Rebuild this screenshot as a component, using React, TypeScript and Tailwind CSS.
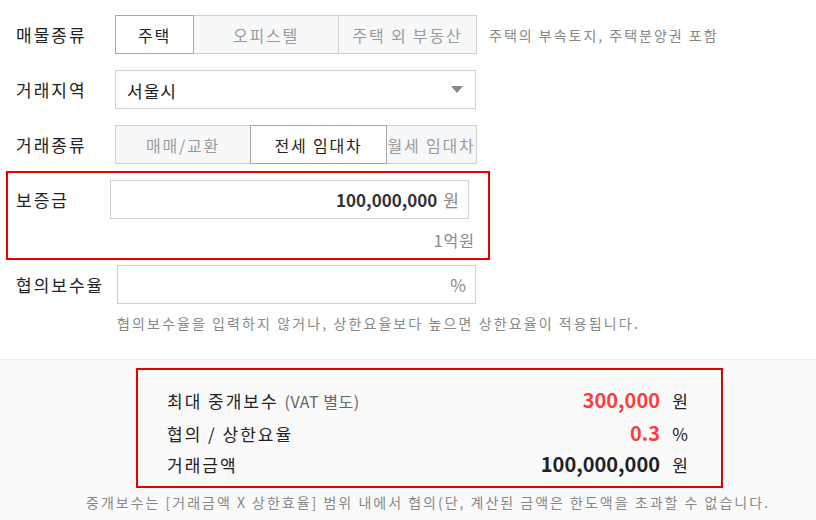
import React from "react";

const F = { fontFamily: '"Noto Sans CJK KR", "Noto Sans", sans-serif' };

function Seg({ items, sel, widths }: { items: string[]; sel: number; widths: number[] }) {
  return (
    <div className="flex h-[39px]">
      {items.map((t, i) => (
        <div
          key={t}
          style={{ width: widths[i] }}
          className={
            "flex items-center justify-center overflow-hidden whitespace-nowrap text-[16px] tracking-[1.8px] border " +
            (i === sel
              ? "bg-white border-[#a8a8a8] text-[#222] relative z-10"
              : "bg-[#f7f8fa] border-[#d0d0d0] text-[#9a9a9a]") +
            (i > 0 ? " -ml-px" : "")
          }
        >
          {t}
        </div>
      ))}
    </div>
  );
}

export default function App() {
  return (
    <div style={F} className="w-[816px] h-[520px] bg-white overflow-hidden text-[#222] leading-none">
      <div className="pt-[15px]">
        {/* 매물종류 */}
        <div className="flex items-center h-[39px]">
          <div className="w-[115px] pl-4 text-[17px] tracking-[2px]">매물종류</div>
          <Seg items={["주택", "오피스텔", "주택 외 부동산"]} sel={0} widths={[79, 146, 139]} />
          <div className="ml-[12px] text-[14px] tracking-[2px] text-[#888]">주택의 부속토지, 주택분양권 포함</div>
        </div>
        {/* 거래지역 */}
        <div className="flex items-center h-[39px] mt-[16px]">
          <div className="w-[115px] pl-4 text-[17px] tracking-[2px]">거래지역</div>
          <div className="w-[361px] h-[39px] border border-[#d0d0d0] flex items-center justify-between pl-[11px] pr-[12px]">
            <span className="text-[17px] tracking-[1px] text-[#222] mt-[2px]">서울시</span>
            <svg width="12" height="7" viewBox="0 0 12 7"><path d="M0 0h12L6 7z" fill="#888" /></svg>
          </div>
        </div>
        {/* 거래종류 */}
        <div className="flex items-center h-[39px] mt-[16px]">
          <div className="w-[115px] pl-4 text-[17px] tracking-[2px]">거래종류</div>
          <Seg items={["매매/교환", "전세 임대차", "월세 임대차"]} sel={1} widths={[136, 137, 91]} />
        </div>
        {/* 보증금 red box */}
        <div className="ml-[6px] mt-[7px] w-[484px] h-[89px] border-2 border-[#e60000] pt-[7px] pl-[8px] pr-[13px]">
          <div className="flex items-center h-[39px]">
            <div className="w-[94px] text-[17px] tracking-[2px]">보증금</div>
            <div className="w-[359px] h-[39px] border border-[#d0d0d0] flex items-center justify-end pr-[9px] gap-[6px]">
              <span className="text-[17px] font-bold text-[#333]">100,000,000</span>
              <span className="text-[17px] text-[#888]">원</span>
            </div>
          </div>
          <div className="text-right text-[16px] tracking-[1px] text-[#888] mt-[13px]">1억원</div>
        </div>
        {/* 협의보수율 */}
        <div className="flex items-center h-[39px] mt-[5px]">
          <div className="w-[117px] pl-4 text-[17px] tracking-[2px]">협의보수율</div>
          <div className="w-[359px] h-[39px] border border-[#d0d0d0] flex items-center justify-end pr-[9px]">
            <span className="text-[17px] text-[#888]">%</span>
          </div>
        </div>
        <div className="pl-[117px] mt-[12px] text-[14px] tracking-[2.1px] text-[#888]">
          협의보수율을 입력하지 않거나, 상한요율보다 높으면 상한요율이 적용됩니다.
        </div>
      </div>
      {/* bottom */}
      <div className="mt-[29px] border-t border-[#ececec] bg-[#fafafa] h-[170px] pt-[8px]">
        <div className="ml-[136px] w-[587px] h-[120px] border-2 border-[#e60000] pl-[29px] pr-[33px] pt-[17px]">
          <div className="flex items-center h-[26px]">
            <div className="flex-1 text-[17px] tracking-[2px]">
              최대 중개보수 <span className="text-[16px] tracking-[0.5px] text-[#666]">(VAT 별도)</span>
            </div>
            <span className="text-[20px] font-bold text-[#ff3b3b]">300,000</span>
            <span className="w-[28px] text-right text-[17px]">원</span>
          </div>
          <div className="flex items-center h-[26px] mt-[7px]">
            <div className="flex-1 text-[17px] tracking-[2px]">협의 / 상한요율</div>
            <span className="text-[20px] font-bold text-[#ff3b3b]">0.3</span>
            <span className="w-[28px] text-right text-[17px]">%</span>
          </div>
          <div className="flex items-center h-[26px] mt-[5px]">
            <div className="flex-1 text-[17px] tracking-[2px]">거래금액</div>
            <span className="text-[20px] font-bold text-[#222]">100,000,000</span>
            <span className="w-[28px] text-right text-[17px]">원</span>
          </div>
        </div>
        <div className="mt-[7px] text-center text-[14px] tracking-[2px] text-[#888] pl-[40px]">
          중개보수는 [거래금액 X 상한효율] 범위 내에서 협의(단, 계산된 금액은 한도액을 초과할 수 없습니다.
        </div>
      </div>
    </div>
  );
}
